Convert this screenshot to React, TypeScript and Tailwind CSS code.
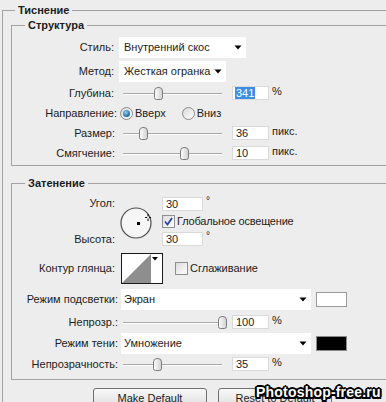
import React from "react";

function Arrow() {
  return (
    <svg width="8" height="5" viewBox="0 0 8 5" className="shrink-0">
      <path d="M0.5 0.5H7.5L4 4.5Z" fill="#000" />
    </svg>
  );
}

function Select({ text, w, pl }: { text: string; w: string; pl: string }) {
  return (
    <div className={`flex h-full items-center justify-between bg-white pr-[4px] ${w} ${pl}`}>
      <span>{text}</span>
      <Arrow />
    </div>
  );
}

function Thumb() {
  return (
    <svg width="9" height="13" viewBox="0 0 9 13">
      <defs>
        <linearGradient id="tg" x1="0" y1="0" x2="1" y2="0">
          <stop offset="0" stopColor="#ffffff" />
          <stop offset="1" stopColor="#cfcfcf" />
        </linearGradient>
      </defs>
      <path
        d="M0.5 4 A3.5 3.5 0 0 1 4 0.5 H5 A3.5 3.5 0 0 1 8.5 4 V10.5 Q8.5 12.5 6.5 12.5 H2.5 Q0.5 12.5 0.5 10.5 Z"
        fill="url(#tg)"
        stroke="#7c7c7c"
      />
    </svg>
  );
}

function Slider({ pos }: { pos: number }) {
  return (
    <div className="relative h-[13px] w-[99px] shrink-0">
      <div className="absolute left-0 right-0 top-[6px] h-[1px] bg-[#a8a8a8]" />
      <div className="absolute left-0 right-0 top-[7px] h-[1px] bg-white" />
      <div className="absolute top-0" style={{ left: pos - 4 }}>
        <Thumb />
      </div>
    </div>
  );
}

function Input({ value, w, selected }: { value: string; w: string; selected?: boolean }) {
  return (
    <div className={`flex h-[14px] shrink-0 items-center border border-[#dadada] bg-white pl-[2px] ${w}`}>
      {selected ? (
        <span className="bg-[#3b8ee3] px-[1px] leading-[12px] text-white">{value}</span>
      ) : (
        <span className="pl-[1px]">{value}</span>
      )}
    </div>
  );
}

function Checkbox({ checked }: { checked?: boolean }) {
  return (
    <div className="flex h-[13px] w-[13px] shrink-0 items-center justify-center border border-[#8e8f8f] bg-[linear-gradient(135deg,#dcdcdc,#ffffff)]">
      {checked && (
        <svg width="9" height="9" viewBox="0 0 9 9">
          <path d="M1 4.5 L3.5 7.5 L8 1" fill="none" stroke="#2a46a8" strokeWidth="1.8" />
        </svg>
      )}
    </div>
  );
}

function Radio({ on }: { on?: boolean }) {
  return (
    <div className="flex h-[13px] w-[13px] shrink-0 items-center justify-center rounded-full border border-[#8a8a8a] bg-[linear-gradient(135deg,#d8d8d8,#ffffff)]">
      {on && (
        <div className="h-[7px] w-[7px] rounded-full bg-[radial-gradient(circle_at_40%_35%,#8fd0f5,#1d6a9c_70%)]" />
      )}
    </div>
  );
}

function AngleCircle() {
  return (
    <svg width="32" height="32" viewBox="0 0 32 32">
      <circle cx="16" cy="16" r="15" fill="#f6f6f6" stroke="#4c4c4c" strokeWidth="1.2" />
      <rect x="17" y="15" width="3" height="3" fill="#000" />
      <path d="M25 10.5H27 M29 10.5H31 M28 7V9.5 M28 11.5V14" stroke="#000" strokeWidth="1" />
    </svg>
  );
}

function Contour() {
  return (
    <svg width="42" height="31" viewBox="0 0 42 31" className="shrink-0">
      <rect x="0.5" y="0.5" width="41" height="30" fill="#fff" stroke="#1a1a1a" />
      <polygon points="1,30 30,1 30,30" fill="#8e8e8e" />
      <path d="M31 4H37L34 7.5Z" fill="#000" />
    </svg>
  );
}

export default function App() {
  return (
    <div className="relative h-[402px] w-[386px] overflow-hidden bg-[#ededed] font-['Liberation_Sans',Arial,sans-serif] text-[11px] leading-[13px] text-[#1c1c1c]">
      <fieldset className="ml-[2px] mt-[3px] w-[420px] border border-[#a3a3a3] pb-[30px] pl-[8px]">
        <legend className="ml-[4px] px-[3px] font-bold leading-[14px]">Тиснение</legend>

        <fieldset className="mt-[1px] border border-[#a3a3a3] pb-[2px] pt-[5px]">
          <legend className="ml-[13px] px-[3px] font-bold leading-[14px]">Структура</legend>

          <div className="flex h-[21px] items-center">
            <span className="w-[102px] shrink-0 text-right">Стиль:</span>
            <div className="ml-[5px] h-[21px]">
              <Select text="Внутренний скос" w="w-[127px]" pl="pl-[5px]" />
            </div>
          </div>

          <div className="mt-[3px] flex h-[21px] items-center">
            <span className="w-[102px] shrink-0 text-right">Метод:</span>
            <div className="ml-[5px] h-[21px]">
              <Select text="Жесткая огранка" w="w-[107px]" pl="pl-[5px]" />
            </div>
          </div>

          <div className="mt-[1px] flex h-[20px] items-center">
            <span className="w-[102px] shrink-0 text-right">Глубина:</span>
            <div className="ml-[9px]">
              <Slider pos={35} />
            </div>
            <div className="ml-[10px]">
              <Input value="341" w="w-[37px]" selected />
            </div>
            <span className="ml-[3px] -mt-[3px]">%</span>
          </div>

          <div className="flex h-[20px] items-center">
            <span className="w-[105px] shrink-0 text-right">Направление:</span>
            <div className="ml-[3px]">
              <Radio on />
            </div>
            <span className="ml-[2px]">Вверх</span>
            <div className="ml-[16px]">
              <Radio />
            </div>
            <span className="ml-[2px]">Вниз</span>
          </div>

          <div className="flex h-[20px] items-center">
            <span className="w-[103px] shrink-0 text-right">Размер:</span>
            <div className="ml-[8px]">
              <Slider pos={20} />
            </div>
            <div className="ml-[10px]">
              <Input value="36" w="w-[37px]" />
            </div>
            <span className="ml-[3px] -mt-[3px]">пикс.</span>
          </div>

          <div className="flex h-[20px] items-center">
            <span className="w-[103px] shrink-0 text-right">Смягчение:</span>
            <div className="ml-[8px]">
              <Slider pos={61} />
            </div>
            <div className="ml-[10px]">
              <Input value="10" w="w-[37px]" />
            </div>
            <span className="ml-[3px] -mt-[3px]">пикс.</span>
          </div>
        </fieldset>

        <fieldset className="mt-[10px] border border-[#a3a3a3] pb-[5px] pt-[7px]">
          <legend className="ml-[13px] px-[3px] font-bold leading-[14px]">Затенение</legend>

          <div className="flex h-[49px]">
            <div className="flex w-[103px] shrink-0 flex-col justify-between text-right">
              <span>Угол:</span>
              <span>Высота:</span>
            </div>
            <div className="ml-[5px] mt-[10px] h-[32px]">
              <AngleCircle />
            </div>
            <div className="ml-[10px] flex flex-col">
              <div className="flex h-[14px]">
                <Input value="30" w="w-[41px]" />
                <span className="ml-[3px] -mt-[3px] text-[10px]">°</span>
              </div>
              <div className="mt-[4px] flex h-[13px] items-center">
                <Checkbox checked />
                <span className="ml-[2px] tracking-[-0.2px]">Глобальное освещение</span>
              </div>
              <div className="mt-[4px] flex h-[14px]">
                <Input value="30" w="w-[41px]" />
                <span className="ml-[3px] -mt-[3px] text-[10px]">°</span>
              </div>
            </div>
          </div>

          <div className="mt-[7px] flex h-[31px] items-center">
            <span className="w-[103px] shrink-0 text-right">Контур глянца:</span>
            <div className="ml-[6px] h-[31px]">
              <Contour />
            </div>
            <div className="ml-[12px]">
              <Checkbox />
            </div>
            <span className="ml-[2px]">Сглаживание</span>
          </div>

          <div className="mt-[5px] flex h-[21px] items-center">
            <span className="w-[106px] shrink-0 text-right">Режим подсветки:</span>
            <div className="ml-[3px] h-[21px]">
              <Select text="Экран" w="w-[190px]" pl="pl-[3px]" />
            </div>
            <div className="ml-[5px] h-[15px] w-[31px] border border-[#9a9a9a] bg-white" />
          </div>

          <div className="mt-[2px] flex h-[20px] items-center">
            <span className="w-[106px] shrink-0 text-right">Непрозр.:</span>
            <div className="ml-[5px]">
              <Slider pos={99} />
            </div>
            <div className="ml-[10px]">
              <Input value="100" w="w-[37px]" />
            </div>
            <span className="ml-[3px] -mt-[3px]">%</span>
          </div>

          <div className="mt-[1px] flex h-[21px] items-center">
            <span className="w-[106px] shrink-0 text-right">Режим тени:</span>
            <div className="ml-[3px] h-[21px]">
              <Select text="Умножение" w="w-[190px]" pl="pl-[3px]" />
            </div>
            <div className="ml-[5px] h-[15px] w-[31px] border border-[#8a8a8a] bg-black" />
          </div>

          <div className="flex h-[20px] items-center">
            <span className="w-[106px] shrink-0 text-right">Непрозрачность:</span>
            <div className="ml-[5px]">
              <Slider pos={34} />
            </div>
            <div className="ml-[10px]">
              <Input value="35" w="w-[37px]" />
            </div>
            <span className="ml-[3px] -mt-[3px]">%</span>
          </div>
        </fieldset>

        <div className="mt-[8px] flex gap-[11px] pl-[82px]">
          <div className="flex h-[22px] w-[114px] items-start justify-center rounded-[3px] border border-[#707070] bg-[linear-gradient(#f8f8f8,#dcdcdc)] pt-[3px]">
            Make Default
          </div>
          <div className="flex h-[22px] w-[114px] items-start justify-center rounded-[3px] border border-[#707070] bg-[linear-gradient(#f8f8f8,#dcdcdc)] pt-[3px]">
            Reset to Default
          </div>
        </div>
      </fieldset>

      <div className="absolute left-[256px] top-[384px] text-[14px] font-bold leading-[17px] tracking-[0.2px] text-white [text-shadow:-1.5px_-1.5px_0_#000,1.5px_-1.5px_0_#000,-1.5px_1.5px_0_#000,1.5px_1.5px_0_#000,0_-2px_0_#000,0_2px_0_#000,-2px_0_0_#000,2px_0_0_#000]">
        Photoshop-free.ru
      </div>
    </div>
  );
}
